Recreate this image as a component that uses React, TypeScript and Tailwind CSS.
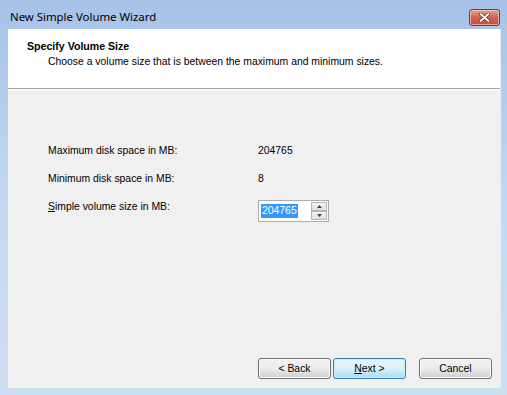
import React from "react";

const ui = { fontFamily: '"Liberation Sans", Arial, sans-serif' };
const title = { fontFamily: '"Noto Sans", "Open Sans", sans-serif' };

function Btn({ children, primary }: { children: React.ReactNode; primary?: boolean }) {
  return (
    <div
      className={
        "w-[73px] h-[21px] rounded-[3px] border flex items-center justify-center text-[10.4px] text-black " +
        (primary
          ? "border-[#3c7fb1] bg-gradient-to-b from-[#eaf6fd] via-[#d9f0fc] to-[#a7d9f5] shadow-[inset_0_0_0_1px_#c8ecfb]"
          : "border-[#707070] bg-gradient-to-b from-[#f2f2f2] via-[#ebebeb] to-[#cfcfcf] shadow-[inset_0_0_0_1px_#fcfcfc]")
      }
    >
      {children}
    </div>
  );
}

export default function App() {
  return (
    <div
      className="w-[507px] h-[395px] flex flex-col bg-gradient-to-b from-[#a6c2e7] via-[#c3d8f0] to-[#cddff3] overflow-hidden"
      style={ui}
    >
      {/* title bar */}
      <div className="h-[29px] flex items-start pl-[10px] pr-[7px] shrink-0">
        <div className="mt-[9px] text-[11.4px] text-black leading-[15px]" style={title}>
          New Simple Volume Wizard
        </div>
        <div className="ml-auto mt-[9px] w-[31px] h-[17px] rounded-[3px] border border-[#6d3c32] bg-gradient-to-b from-[#e2a392] via-[#cc6550] to-[#c4503a] flex items-center justify-center shadow-[inset_0_0_0_1px_rgba(255,220,210,0.6)]">
          <svg width="11" height="9" viewBox="0 0 11 9">
            <path d="M1.5 1 L9.5 8 M9.5 1 L1.5 8" stroke="#5a2a20" strokeWidth="3.2" strokeLinecap="round" />
            <path d="M1.5 1 L9.5 8 M9.5 1 L1.5 8" stroke="#ffffff" strokeWidth="1.8" strokeLinecap="round" />
          </svg>
        </div>
      </div>
      {/* client */}
      <div className="ml-[8px] mr-[6px] mb-[7px] flex-1 flex flex-col border-r border-b border-[#e6eef8]">
        <div className="h-[59px] bg-white shrink-0 pl-[19px] pt-[11px]">
          <div className="text-[10.6px] font-bold text-black leading-[13px]">Specify Volume Size</div>
          <div className="text-[10.4px] text-black leading-[13px] mt-[2px] pl-[21px]">
            Choose a volume size that is between the maximum and minimum sizes.
          </div>
        </div>
        <div className="h-px bg-[#a0a0a0] shrink-0" />
        <div className="h-px bg-white shrink-0" />
        <div className="flex-1 bg-[#f0f0f0] flex flex-col">
          <div className="pl-[40px] pt-[54px] flex flex-col text-[10.4px] text-black">
            <div className="flex items-center h-[13px]">
              <div className="w-[210px]">Maximum disk space in MB:</div>
              <div>204765</div>
            </div>
            <div className="flex items-center h-[13px] mt-[15px]">
              <div className="w-[210px]">Minimum disk space in MB:</div>
              <div>8</div>
            </div>
            <div className="flex items-start mt-[15px]">
              <div className="w-[210px] leading-[13px]">
                <span className="underline">S</span>imple volume size in MB:
              </div>
              <div className="w-[71px] h-[22px] bg-white border border-[#abadb3] flex items-center pl-[2px] pr-[1px]">
                <span className="bg-[#3399ff] text-white leading-[14px] px-px">204765</span>
                <div className="ml-auto flex flex-col gap-0 h-[18px] w-[16px]">
                  <div className="h-[9px] border border-[#b5b5b5] bg-gradient-to-b from-[#f6f6f6] to-[#dedede] flex items-center justify-center">
                    <svg width="5" height="3" viewBox="0 0 5 3"><path d="M0 3 L2.5 0 L5 3 Z" fill="#404040" /></svg>
                  </div>
                  <div className="h-[9px] border border-[#b5b5b5] bg-gradient-to-b from-[#f6f6f6] to-[#dedede] flex items-center justify-center">
                    <svg width="5" height="3" viewBox="0 0 5 3"><path d="M0 0 L5 0 L2.5 3 Z" fill="#404040" /></svg>
                  </div>
                </div>
              </div>
            </div>
          </div>
          <div className="mt-auto mb-[8px] flex items-center pl-[250px]">
            <Btn>&lt; Back</Btn>
            <div className="ml-[2px]">
              <Btn primary>
                <span><span className="underline">N</span>ext &gt;</span>
              </Btn>
            </div>
            <div className="ml-[13px]">
              <Btn>Cancel</Btn>
            </div>
          </div>
        </div>
      </div>
    </div>
  );
}
